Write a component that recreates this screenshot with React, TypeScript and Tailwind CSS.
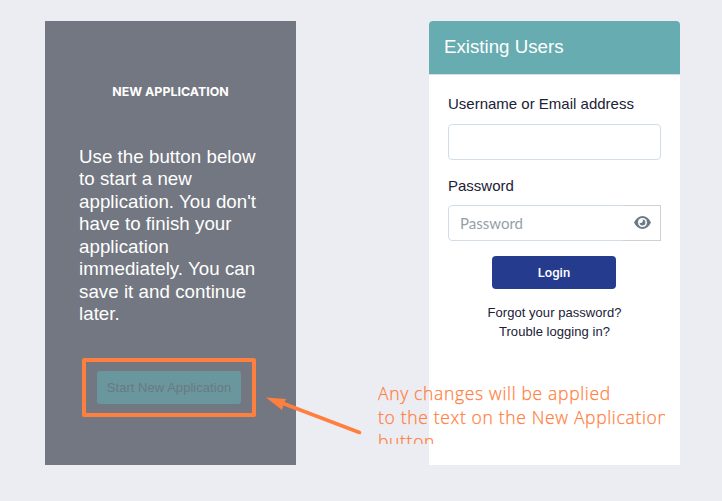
const App = () => {
  return (
    <div className="relative h-[501px] w-[722px] overflow-hidden bg-[#ecedf3] font-['Liberation_Sans',sans-serif]">
      <main className="flex items-start gap-[133px] pt-[21px] pl-[45px]">
        {/* New application */}
        <section className="flex h-[444px] w-[251px] flex-col bg-[#737781] px-[34px] pt-[62px] text-white">
          <h2 className="text-center font-['Inter',sans-serif] text-[12.4px] leading-[17px] font-bold whitespace-nowrap">
            NEW APPLICATION
          </h2>
          <p className="mt-[46px] text-[18.72px] leading-[22.46px] tracking-[0.04px] whitespace-nowrap">
            Use the button below
            <br />
            to start a new
            <br />
            application. You don't
            <br />
            have to finish your
            <br />
            application
            <br />
            immediately. You can
            <br />
            save it and continue
            <br />
            later.
          </p>
          <div className="mt-[32px] ml-[3px] flex h-[59px] w-[174px] items-center justify-center rounded-[2px] border-4 border-[#ff7f3f]">
            <button className="h-[33px] w-[144px] rounded-[3px] bg-[#6a979d] pt-px text-[13px] tracking-[0.04px] whitespace-nowrap text-[#697983]">
              Start New Application
            </button>
          </div>
        </section>

        {/* Existing users */}
        <section className="h-[444px] w-[251px] overflow-hidden rounded-t-[4px] bg-white text-[#212135]">
          <header className="h-[54px] border-b border-[#d5dfe5] bg-[#67acb1] pt-[14px] pl-[15px] text-[18.72px] leading-6 text-white">
            Existing Users
          </header>
          <form className="flex flex-col px-[19px]">
            <label className="mt-[18px] text-[15px] leading-[22px]">Username or Email address</label>
            <input className="mt-[9px] h-9 rounded-[4px] border border-[#d2dde5] px-3 outline-none" />
            <label className="mt-[15px] text-[15px] leading-[22px]">Password</label>
            <div className="mt-2 flex h-9 items-center rounded-l-[4px] border border-[#d2dde5]">
              <input
                type="text"
                placeholder="Password"
                className="w-[174px] pl-[11px] font-['Lato',sans-serif] text-[15px] outline-none placeholder:text-[#93a1a6]"
              />
              <span className="-my-px -mr-px flex h-9 flex-1 items-center justify-center border-y border-r border-[#ced0d8] pb-px pl-[2px]">
                <svg width="17" height="13" viewBox="0 0 17 13">
                  <path d="M0 6.5C2 2.4 5 0 8.5 0S15 2.4 17 6.5C15 10.6 12 13 8.5 13S2 10.6 0 6.5Z" fill="#6c7a87" />
                  <circle cx="8.5" cy="6.5" r="4.5" fill="#fff" />
                  <path d="M8.3 3.6A2.9 2.9 0 1 1 5.6 6.4 1.6 1.6 0 0 0 8.3 3.6Z" fill="#6c7a87" />
                </svg>
              </span>
            </div>
            <button type="button" className="mt-[15px] mr-[2px] h-[33px] w-[124px] self-center rounded-[4px] bg-[#253b8e] pl-px font-['Roboto',sans-serif] text-[13px] font-medium text-white">
              Login
            </button>
            <div className="mt-[14px] text-center text-[13px] leading-[19px] tracking-[0.05px] whitespace-nowrap">
              <p>Forgot your password?</p>
              <p>Trouble logging in?</p>
            </div>
          </form>
        </section>
      </main>

      {/* Callout arrow */}
      <svg className="absolute top-[390px] left-[260px]" width="110" height="50" viewBox="0 0 110 50">
        <path d="M6 7.5 26 9 24 13.5 22 20Z" fill="#ff7f3f" />
        <path d="M22 13 99.5 42.5" stroke="#ff7f3f" strokeWidth="3.6" strokeLinecap="round" />
      </svg>

      {/* Callout text */}
      <div className="absolute top-[381px] left-[378px] h-[63px] w-[287px] overflow-hidden font-['Open_Sans',sans-serif] text-[17.5px] leading-6 font-light tracking-[0.67px] whitespace-nowrap text-[#ff7f3f] [-webkit-text-stroke:0.25px_#ff7f3f]">
        <p>Any changes will be applied</p>
        <p>to the text on the New Application</p>
        <p>button</p>
      </div>
    </div>
  );
};

export default App;
